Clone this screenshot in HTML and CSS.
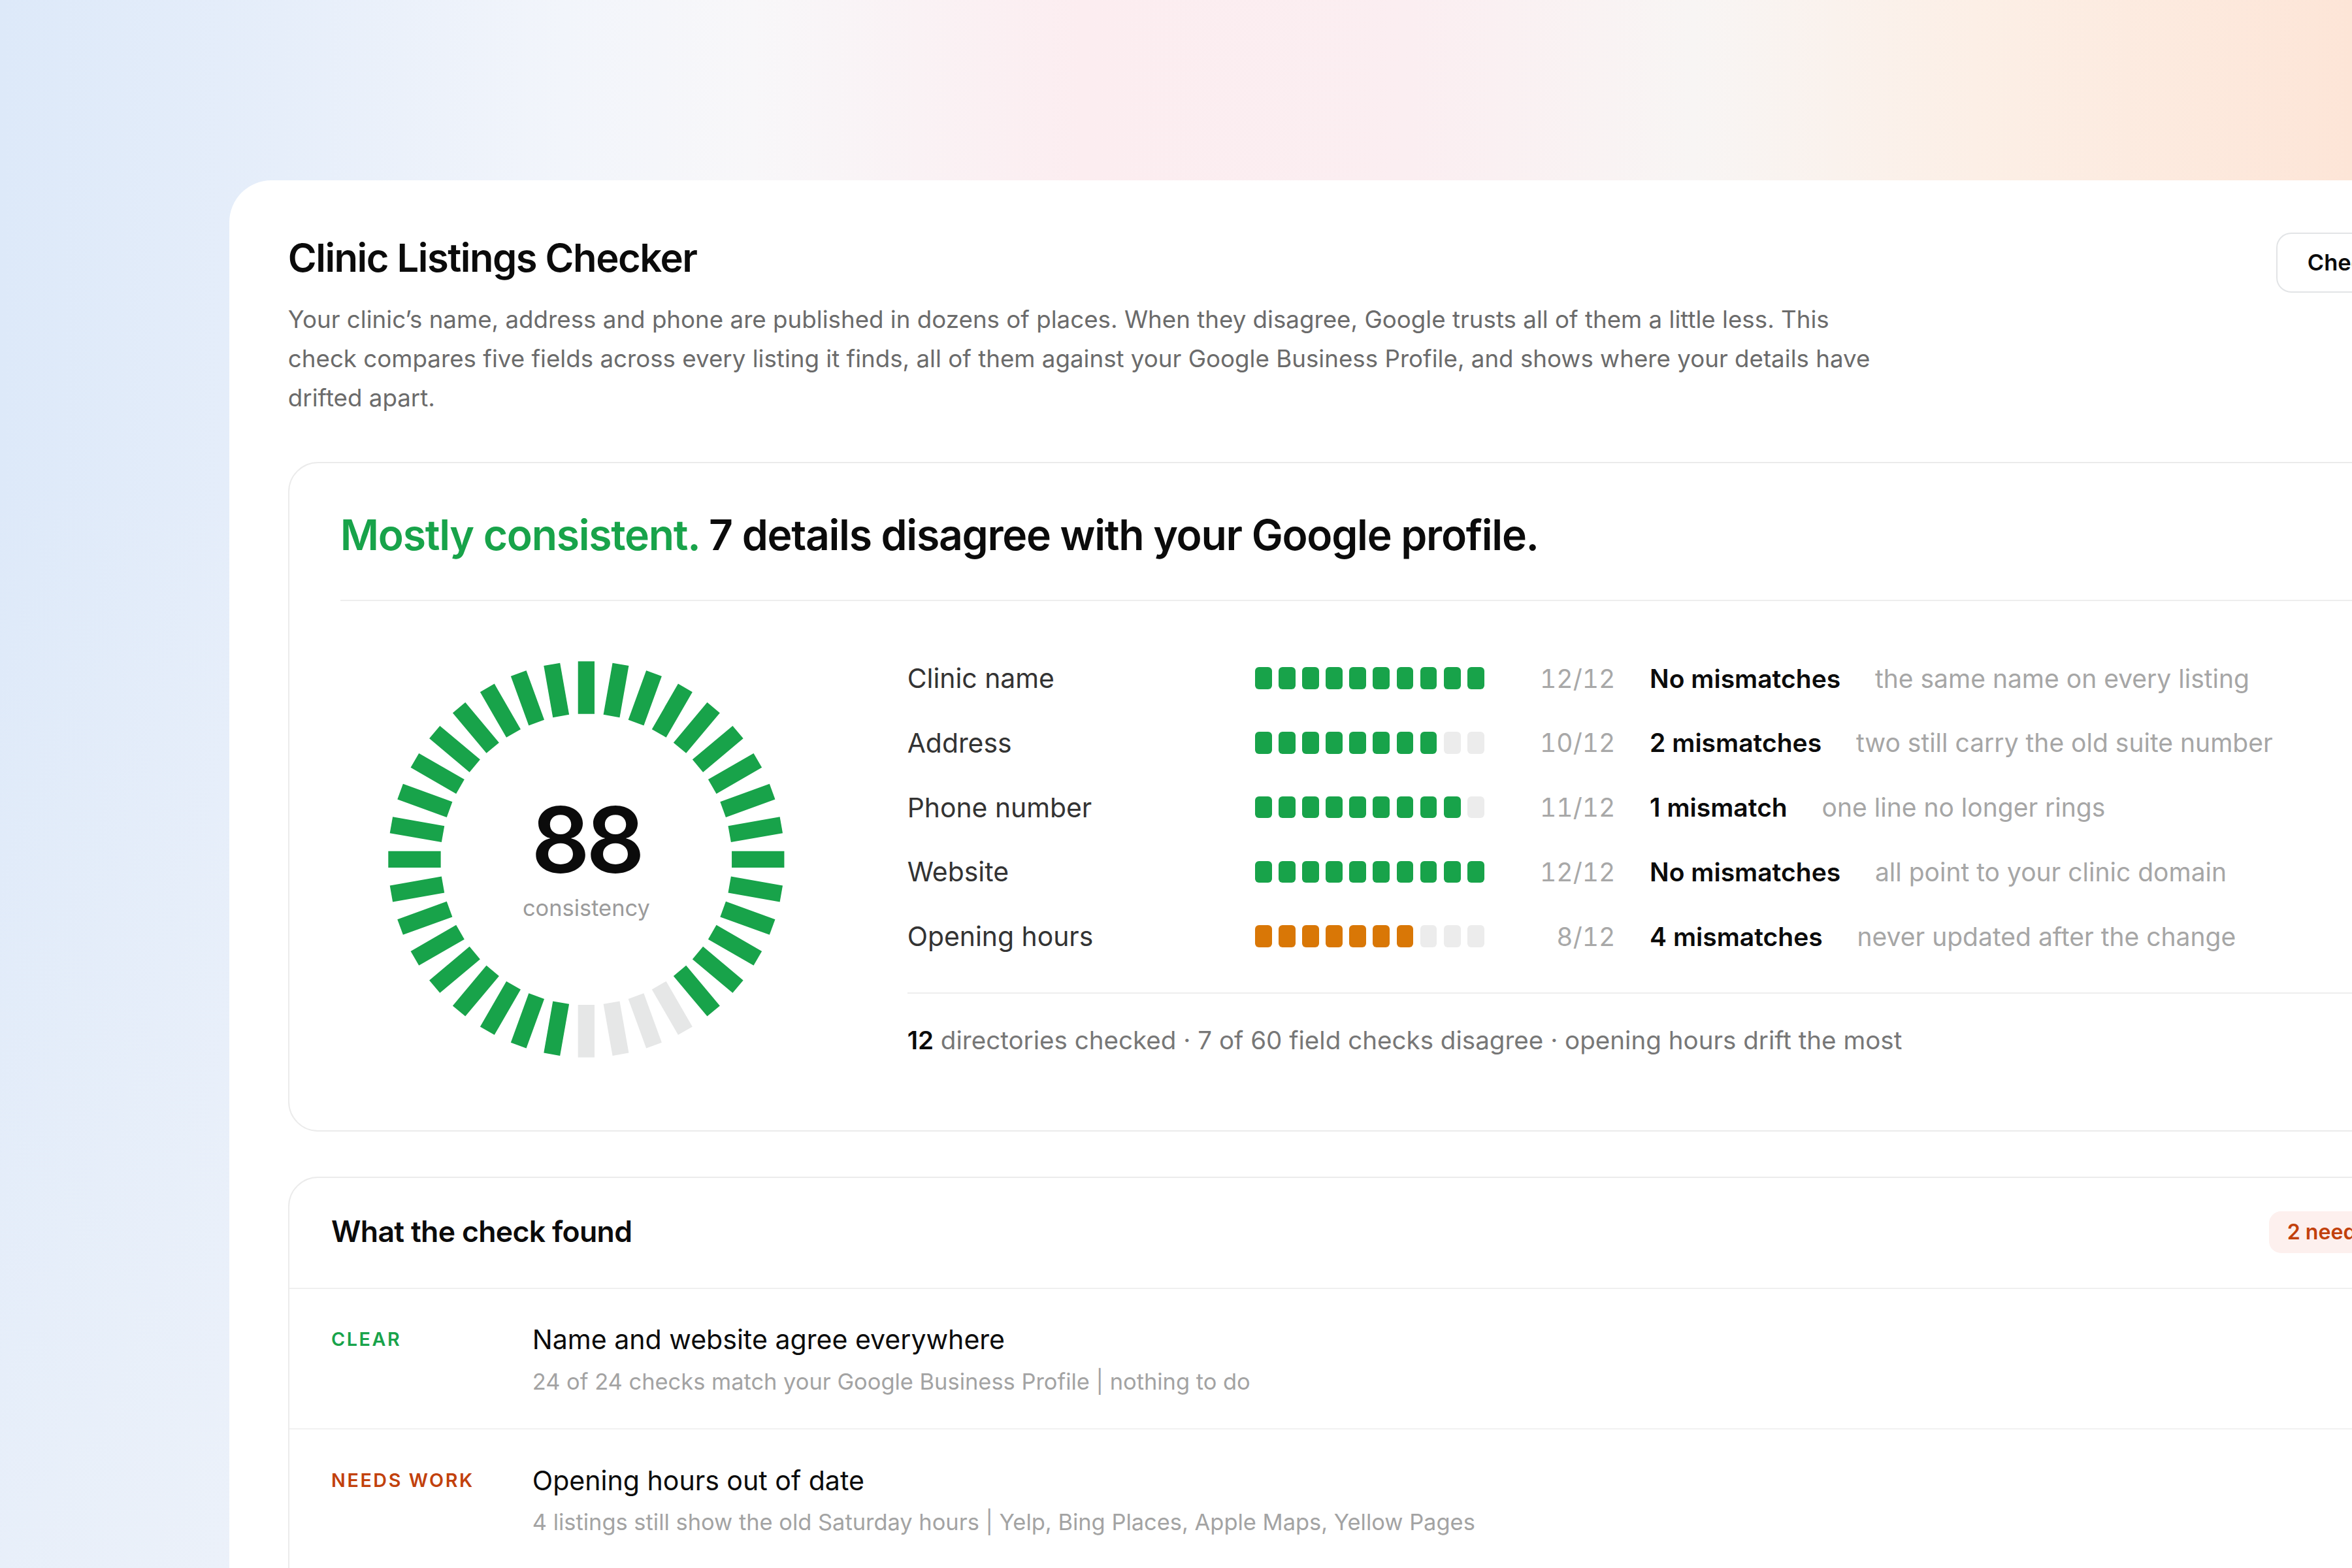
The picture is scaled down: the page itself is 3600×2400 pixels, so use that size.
FILE: index.html
```html
<!DOCTYPE html>
<html lang="en">
<head>
<meta charset="utf-8">
<title>Clinic Listings Checker</title>
<link rel="stylesheet" href="styles.css">
</head>
<body>
<main class="card">
  <header class="head">
    <div class="head-text">
      <h1 class="title">Clinic Listings Checker</h1>
      <p class="lede">Your clinic’s name, address and phone are published in dozens of places. When they disagree, Google trusts all of them a little less. This check compares five fields across every listing it finds, all of them against your Google Business Profile, and shows where your details have drifted apart.</p>
    </div>
    <button class="btn" type="button">Check again</button>
  </header>

  <section class="summary">
    <h2 class="verdict"><span class="ok">Mostly consistent.</span> 7 details disagree with your Google profile.</h2>
    <div class="summary-body">
      <div class="gauge">
        <div class="gauge-ring">
          <svg class="ring" viewBox="0 0 266 266" width="266" height="266" aria-hidden="true">
            <g class="tick on">
              <line x1="133" y1="1" x2="133" y2="36" transform="rotate(0 133 133)"/>
              <line x1="133" y1="1" x2="133" y2="36" transform="rotate(10 133 133)"/>
              <line x1="133" y1="1" x2="133" y2="36" transform="rotate(20 133 133)"/>
              <line x1="133" y1="1" x2="133" y2="36" transform="rotate(30 133 133)"/>
              <line x1="133" y1="1" x2="133" y2="36" transform="rotate(40 133 133)"/>
              <line x1="133" y1="1" x2="133" y2="36" transform="rotate(50 133 133)"/>
              <line x1="133" y1="1" x2="133" y2="36" transform="rotate(60 133 133)"/>
              <line x1="133" y1="1" x2="133" y2="36" transform="rotate(70 133 133)"/>
              <line x1="133" y1="1" x2="133" y2="36" transform="rotate(80 133 133)"/>
              <line x1="133" y1="1" x2="133" y2="36" transform="rotate(90 133 133)"/>
              <line x1="133" y1="1" x2="133" y2="36" transform="rotate(100 133 133)"/>
              <line x1="133" y1="1" x2="133" y2="36" transform="rotate(110 133 133)"/>
              <line x1="133" y1="1" x2="133" y2="36" transform="rotate(120 133 133)"/>
              <line x1="133" y1="1" x2="133" y2="36" transform="rotate(130 133 133)"/>
              <line x1="133" y1="1" x2="133" y2="36" transform="rotate(140 133 133)"/>
              <line x1="133" y1="1" x2="133" y2="36" transform="rotate(190 133 133)"/>
              <line x1="133" y1="1" x2="133" y2="36" transform="rotate(200 133 133)"/>
              <line x1="133" y1="1" x2="133" y2="36" transform="rotate(210 133 133)"/>
              <line x1="133" y1="1" x2="133" y2="36" transform="rotate(220 133 133)"/>
              <line x1="133" y1="1" x2="133" y2="36" transform="rotate(230 133 133)"/>
              <line x1="133" y1="1" x2="133" y2="36" transform="rotate(240 133 133)"/>
              <line x1="133" y1="1" x2="133" y2="36" transform="rotate(250 133 133)"/>
              <line x1="133" y1="1" x2="133" y2="36" transform="rotate(260 133 133)"/>
              <line x1="133" y1="1" x2="133" y2="36" transform="rotate(270 133 133)"/>
              <line x1="133" y1="1" x2="133" y2="36" transform="rotate(280 133 133)"/>
              <line x1="133" y1="1" x2="133" y2="36" transform="rotate(290 133 133)"/>
              <line x1="133" y1="1" x2="133" y2="36" transform="rotate(300 133 133)"/>
              <line x1="133" y1="1" x2="133" y2="36" transform="rotate(310 133 133)"/>
              <line x1="133" y1="1" x2="133" y2="36" transform="rotate(320 133 133)"/>
              <line x1="133" y1="1" x2="133" y2="36" transform="rotate(330 133 133)"/>
              <line x1="133" y1="1" x2="133" y2="36" transform="rotate(340 133 133)"/>
              <line x1="133" y1="1" x2="133" y2="36" transform="rotate(350 133 133)"/>
            </g>
            <g class="tick off">
              <line x1="133" y1="1" x2="133" y2="36" transform="rotate(150 133 133)"/>
              <line x1="133" y1="1" x2="133" y2="36" transform="rotate(160 133 133)"/>
              <line x1="133" y1="1" x2="133" y2="36" transform="rotate(170 133 133)"/>
              <line x1="133" y1="1" x2="133" y2="36" transform="rotate(180 133 133)"/>
            </g>
          </svg>
          <div class="gauge-center">
            <span class="score">88</span>
            <span class="score-label">consistency</span>
          </div>
        </div>
      </div>

      <div class="fields">
        <div class="field-list">
          <div class="field">
            <span class="f-name">Clinic name</span>
            <span class="segs"><i class="seg on"></i><i class="seg on"></i><i class="seg on"></i><i class="seg on"></i><i class="seg on"></i><i class="seg on"></i><i class="seg on"></i><i class="seg on"></i><i class="seg on"></i><i class="seg on"></i></span>
            <span class="f-count">12/12</span>
            <span class="f-result"><b class="f-status">No mismatches</b><span class="f-note">the same name on every listing</span></span>
          </div>
          <div class="field">
            <span class="f-name">Address</span>
            <span class="segs"><i class="seg on"></i><i class="seg on"></i><i class="seg on"></i><i class="seg on"></i><i class="seg on"></i><i class="seg on"></i><i class="seg on"></i><i class="seg on"></i><i class="seg off"></i><i class="seg off"></i></span>
            <span class="f-count">10/12</span>
            <span class="f-result"><b class="f-status">2 mismatches</b><span class="f-note">two still carry the old suite number</span></span>
          </div>
          <div class="field">
            <span class="f-name">Phone number</span>
            <span class="segs"><i class="seg on"></i><i class="seg on"></i><i class="seg on"></i><i class="seg on"></i><i class="seg on"></i><i class="seg on"></i><i class="seg on"></i><i class="seg on"></i><i class="seg on"></i><i class="seg off"></i></span>
            <span class="f-count">11/12</span>
            <span class="f-result"><b class="f-status">1 mismatch</b><span class="f-note">one line no longer rings</span></span>
          </div>
          <div class="field">
            <span class="f-name">Website</span>
            <span class="segs"><i class="seg on"></i><i class="seg on"></i><i class="seg on"></i><i class="seg on"></i><i class="seg on"></i><i class="seg on"></i><i class="seg on"></i><i class="seg on"></i><i class="seg on"></i><i class="seg on"></i></span>
            <span class="f-count">12/12</span>
            <span class="f-result"><b class="f-status">No mismatches</b><span class="f-note">all point to your clinic domain</span></span>
          </div>
          <div class="field">
            <span class="f-name">Opening hours</span>
            <span class="segs"><i class="seg warn"></i><i class="seg warn"></i><i class="seg warn"></i><i class="seg warn"></i><i class="seg warn"></i><i class="seg warn"></i><i class="seg warn"></i><i class="seg off"></i><i class="seg off"></i><i class="seg off"></i></span>
            <span class="f-count">8/12</span>
            <span class="f-result"><b class="f-status">4 mismatches</b><span class="f-note">never updated after the change</span></span>
          </div>
        </div>
        <p class="tally"><b>12</b> directories checked · 7 of 60 field checks disagree · opening hours drift the most</p>
      </div>
    </div>
  </section>

  <section class="findings">
    <div class="findings-head">
      <h3 class="findings-title">What the check found</h3>
      <span class="badge">2 need work</span>
    </div>
    <div class="finding">
      <span class="f-tag clear">Clear</span>
      <div class="finding-text">
        <p class="finding-title">Name and website agree everywhere</p>
        <p class="finding-sub">24 of 24 checks match your Google Business Profile | nothing to do</p>
      </div>
    </div>
    <div class="finding">
      <span class="f-tag work">Needs work</span>
      <div class="finding-text">
        <p class="finding-title">Opening hours out of date</p>
        <p class="finding-sub">4 listings still show the old Saturday hours | Yelp, Bing Places, Apple Maps, Yellow Pages</p>
      </div>
    </div>
  </section>
</main>
</body>
</html>
```

FILE: styles.css
```css
html {
  zoom: 2.2959;
  overflow: hidden;
  height: 100%;
}

body {
  margin: 0;
  height: 100%;
  overflow: hidden;
  font-family: Inter, "Noto Sans", "Liberation Sans", sans-serif;
  color: #0b0b0b;
  background-color: #f3f6fb;
  background-image:
    linear-gradient(180deg, rgba(243, 246, 251, 0) 0%, rgba(243, 246, 251, 0) 30%, rgba(241, 244, 250, 0.55) 100%),
    linear-gradient(90deg, #dde9f9 0%, #e6eefa 12%, #f2f5fb 24%, #f8f7f9 32%, #fcedf0 46%, #fbeef1 60%, #f8f5f4 72%, #fcefe6 84%, #fde5d7 100%);
}

.card {
  box-sizing: border-box;
  width: 1535px;
  margin: 120px 0 0 153px;
  padding: 36px 39px 60px;
  background: #ffffff;
  border-radius: 28px 28px 0 0;
  min-height: 1200px;
}

.head {
  display: flex;
  justify-content: space-between;
  align-items: flex-start;
}

.title {
  margin: 0;
  font-size: 26px;
  line-height: 32px;
  font-weight: 600;
  letter-spacing: -0.025em;
}

.lede {
  margin: 12px 0 0;
  max-width: 1060px;
  font-size: 16px;
  line-height: 26px;
  color: #6b6b6b;
}

.btn {
  margin-top: -1px;
  height: 40px;
  padding: 0 20px;
  border: 1px solid #e2e4e6;
  border-radius: 10px;
  background: #ffffff;
  font-family: inherit;
  font-size: 15px;
  font-weight: 600;
  color: #0b0b0b;
}

.summary {
  margin-top: 30px;
  padding: 31px 34px 47px;
  border: 1px solid #ebebeb;
  border-radius: 20px;
}

.verdict {
  margin: 0;
  padding-bottom: 26px;
  border-bottom: 1px solid #ededed;
  font-size: 28px;
  line-height: 34px;
  font-weight: 600;
  letter-spacing: -0.02em;
}

.ok {
  color: #18a34a;
}

.summary-body {
  display: flex;
  gap: 50px;
  padding-top: 30px;
}

.gauge {
  flex: 0 0 328px;
  display: flex;
  justify-content: center;
  padding-top: 9px;
}

.gauge-ring {
  position: relative;
  width: 266px;
  height: 266px;
}

.ring {
  display: block;
}

.tick line {
  stroke-width: 11;
}

.tick.on line {
  stroke: #18a34a;
}

.tick.off line {
  stroke: #e6e7e7;
}

.gauge-center {
  position: absolute;
  inset: 0;
  display: flex;
  flex-direction: column;
  align-items: center;
  justify-content: center;
  gap: 5px;
}

.score {
  font-size: 61px;
  line-height: 60px;
  font-weight: 600;
  letter-spacing: -0.04em;
}

.score-label {
  font-size: 15px;
  line-height: 20px;
  color: #9b9b9b;
}

.fields {
  flex: 1;
}

.field-list {
  padding-bottom: 16px;
  border-bottom: 1px solid #eeeeee;
}

.field {
  display: grid;
  grid-template-columns: 232px 154px 86px 1fr;
  align-items: center;
  height: 43px;
  font-size: 17px;
}

.f-name {
  font-size: 17.8px;
  color: #333333;
}

.segs {
  display: flex;
  gap: 4.4px;
}

.seg {
  width: 11.3px;
  height: 14.6px;
  border-radius: 2.6px;
}

.seg.on {
  background: #18a34a;
}

.seg.warn {
  background: #d97706;
}

.seg.off {
  background: #ececec;
}

.f-count {
  text-align: right;
  font-variant-numeric: tabular-nums;
  color: #a8a8a8;
}

.f-result {
  display: flex;
  gap: 23px;
  padding-left: 23px;
  white-space: nowrap;
}

.f-status {
  font-weight: 600;
  color: #0b0b0b;
}

.f-note {
  color: #a6a6a6;
}

.tally {
  margin: 18px 0 0;
  font-size: 16.8px;
  line-height: 26px;
  color: #777777;
}

.tally b {
  font-weight: 600;
  color: #0b0b0b;
}

.findings {
  margin-top: 30px;
  padding-bottom: 80px;
  border: 1px solid #ebebeb;
  border-radius: 20px;
}

.findings-head {
  display: flex;
  justify-content: space-between;
  align-items: center;
  padding: 22px 28px 23px;
  border-bottom: 1px solid #efefef;
}

.findings-title {
  margin: 0;
  font-size: 19.4px;
  line-height: 26px;
  font-weight: 600;
  letter-spacing: -0.015em;
}

.badge {
  padding: 0 12px;
  line-height: 28px;
  border-radius: 8px;
  background: #fdf0ee;
  color: #c2410c;
  font-size: 14px;
  font-weight: 600;
}

.finding {
  display: flex;
  padding: 22px 28px 20px;
  border-bottom: 1px solid #f1f1f1;
}

.f-tag {
  flex: 0 0 134px;
  padding-top: 4px;
  font-size: 12.5px;
  line-height: 16px;
  font-weight: 600;
  letter-spacing: 0.09em;
  text-transform: uppercase;
}

.f-tag.clear {
  color: #18a34a;
}

.f-tag.work {
  color: #c2410c;
}

.finding-text p {
  margin: 0;
}

.finding-title {
  font-size: 17.9px;
  line-height: 24px;
  color: #0b0b0b;
}

.finding-sub {
  margin-top: 5px !important;
  font-size: 15px;
  line-height: 22px;
  color: #a3a3a3;
}
```
